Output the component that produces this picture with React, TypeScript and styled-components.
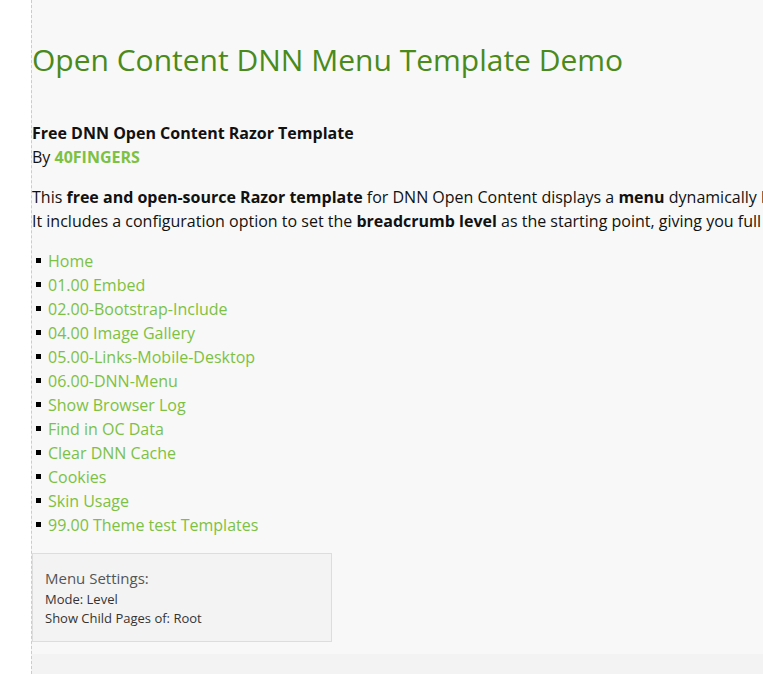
import React from "react";
import styled, { createGlobalStyle } from "styled-components";

const Global = createGlobalStyle`
  html, body { margin: 0; padding: 0; background: #ffffff; overflow: hidden; }
  body { font-family: "Open Sans", "Liberation Sans", sans-serif; color: #111; }
`;

const Frame = styled.div`
  margin-left: 31px;
  border-left: 1px dashed #cccccc;
  min-height: 674px;
  display: flex;
  flex-direction: column;
  background: #f3f3f3;
`;

const Panel = styled.section`
  background: #f8f8f8;
  padding: 40px 0 12px 0;
  overflow: hidden;
`;

const Title = styled.h1`
  margin: 0 0 41px 0;
  font-size: 30px;
  line-height: 40px;
  font-weight: 400;
  color: #4a8a1b;
  white-space: nowrap;
`;

const Text = styled.p<{ $gap?: number }>`
  margin: 0 0 ${(p) => p.$gap ?? 16}px 0;
  font-size: 16px;
  line-height: 24px;
  white-space: nowrap;
`;

const Line = styled.span`
  display: block;
`;

const Strong = styled.strong`
  font-weight: 700;
`;

const Brand = styled.a`
  color: #7dc142;
  font-weight: 700;
  text-decoration: none;
`;

const Menu = styled.ul`
  margin: 0 0 16px 0;
  padding-left: 4px;
  list-style: none;
  font-size: 16px;
  line-height: 24px;
`;

const Item = styled.li`
  &::before {
    content: "";
    display: inline-block;
    width: 5px;
    height: 5px;
    background: #000;
    margin-right: 7px;
    vertical-align: 4px;
  }
`;

const MenuLink = styled.a`
  color: #7dc142;
  text-decoration: none;
`;

const Settings = styled.div`
  box-sizing: content-box;
  border: 1px solid #dddddd;
  background: #f3f3f3;
  padding: 13px 0 13px 12px;
  width: 286px;
  color: #444;
`;

const SettingsTitle = styled.div`
  font-size: 15px;
  line-height: 23px;
  color: #555;
`;

const SettingsRow = styled.div`
  font-size: 13px;
  line-height: 19px;
  color: #333;
`;

const Bottom = styled.div`
  flex: 1;
  background: #f3f3f3;
`;

const items = [
  "Home",
  "01.00 Embed",
  "02.00-Bootstrap-Include",
  "04.00 Image Gallery",
  "05.00-Links-Mobile-Desktop",
  "06.00-DNN-Menu",
  "Show Browser Log",
  "Find in OC Data",
  "Clear DNN Cache",
  "Cookies",
  "Skin Usage",
  "99.00 Theme test Templates",
];

export default function App() {
  return (
    <>
      <Global />
      <Frame>
        <Panel>
          <Title>Open Content DNN Menu Template Demo</Title>
          <Text>
            <Line>
              <Strong>Free DNN Open Content Razor Template</Strong>
            </Line>
            <Line>
              By <Brand href="#">40FINGERS</Brand>
            </Line>
          </Text>
          <Text>
            <Line>
              This <Strong>free and open-source Razor template</Strong> for DNN Open Content displays a{" "}
              <Strong>menu</Strong> dynamically based on the DNN page structure.
            </Line>
            <Line>
              It includes a configuration option to set the <Strong>breadcrumb level</Strong> as the starting
              point, giving you full control over which pages are shown.
            </Line>
          </Text>
          <Menu>
            {items.map((t) => (
              <Item key={t}>
                <MenuLink href="#">{t}</MenuLink>
              </Item>
            ))}
          </Menu>
          <Settings>
            <SettingsTitle>Menu Settings:</SettingsTitle>
            <SettingsRow>Mode: Level</SettingsRow>
            <SettingsRow>Show Child Pages of: Root</SettingsRow>
          </Settings>
        </Panel>
        <Bottom />
      </Frame>
    </>
  );
}
